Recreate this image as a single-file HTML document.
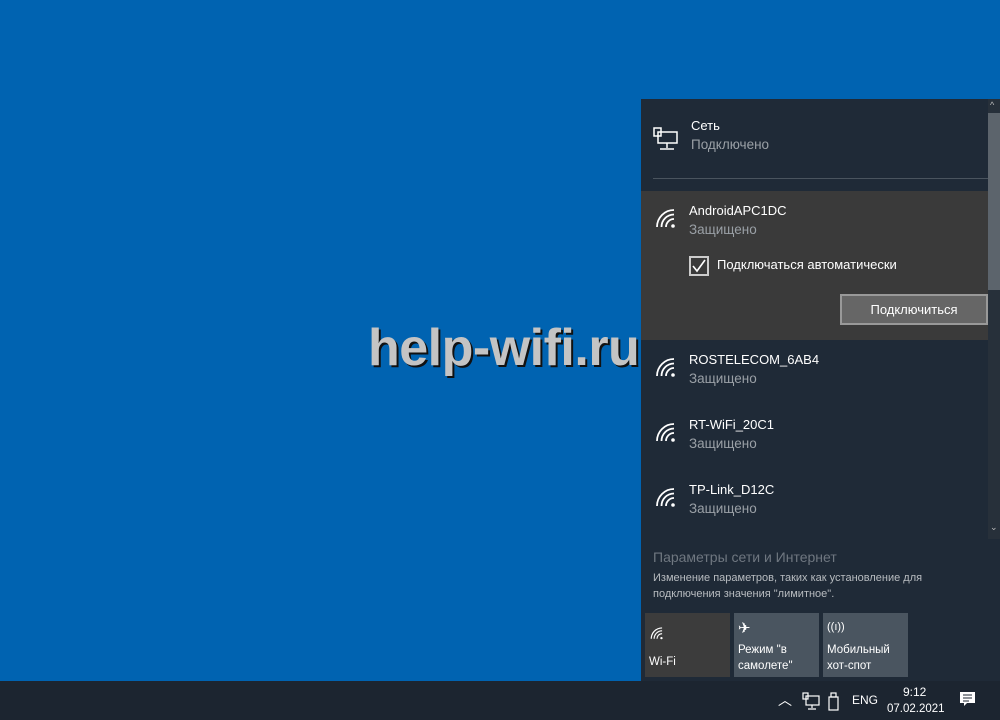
<!DOCTYPE html><html><head><meta charset="utf-8"><style>
*{margin:0;padding:0;box-sizing:border-box}
body{width:1000px;height:720px;overflow:hidden;background:#0063b1;font-family:"Segoe UI","Liberation Sans","DejaVu Sans",sans-serif;position:relative}
.a{position:absolute}
.panel{left:641px;top:99px;width:359px;height:582px;background:#1f2a37}
.t{color:#fff;font-size:13px;white-space:nowrap}
.s{color:#9aa0a6;font-size:13.5px;white-space:nowrap}
.tile{background:#4a5560;top:613px;width:85px;height:64px;color:#fff;font-size:11.5px}
</style></head><body>
<div class="a" style="left:368px;top:318px;font:bold 52px 'Liberation Sans',sans-serif;color:#c4c4c4;text-shadow:2px 2px 0 #111;letter-spacing:-0.5px">help-wifi.ru</div>
<div class="a panel"></div>
<div class="a" style="left:988px;top:99px;width:12px;height:440px;background:#27303a"></div>
<div class="a" style="left:988px;top:113px;width:12px;height:177px;background:#5c646c"></div>
<div class="a" style="left:990px;top:100px;color:#bbb;font-size:9px">^</div>
<div class="a" style="left:990px;top:522px;color:#bbb;font-size:9px">⌄</div>
<svg class="a" style="left:653px;top:127px" width="26" height="24" viewBox="0 0 26 24" fill="none" stroke="#fff" stroke-width="1.5"><rect x="1" y="1" width="7" height="8"/><rect x="5" y="5" width="19" height="11"/><path d="M14 16v5M7 22h14"/></svg>
<div class="a t" style="left:691px;top:118px">Сеть</div>
<div class="a s" style="left:691px;top:137px">Подключено</div>
<div class="a" style="left:653px;top:178px;width:335px;height:1px;background:#4a545e"></div>
<div class="a" style="left:641px;top:191px;width:347px;height:149px;background:#3a3a3a"></div>
<svg width="0" height="0" style="position:absolute"><defs><g id="w" fill="none" stroke="#fff" stroke-width="1.8"><path d="M2 20A17 17 0 0 1 19 3"/><path d="M6.5 20A12.5 12.5 0 0 1 19 7.5"/><path d="M11 20A8 8 0 0 1 19 12"/><circle cx="18" cy="19" r="1.8" fill="#fff" stroke="none"/></g></defs></svg>
<svg class="a" style="left:655px;top:207px" width="22" height="22"><use href="#w"/></svg>
<div class="a t" style="left:689px;top:203px">AndroidAPC1DC</div>
<div class="a s" style="left:689px;top:222px">Защищено</div>
<div class="a" style="left:689px;top:256px;width:20px;height:20px;border:2px solid #ccc"></div>
<svg class="a" style="left:691px;top:258px" width="16" height="16"><path d="M2 8l4 5 8-11" stroke="#fff" stroke-width="1.6" fill="none"/></svg>
<div class="a t" style="left:717px;top:257px">Подключаться автоматически</div>
<div class="a" style="left:840px;top:294px;width:148px;height:31px;background:#666;border:2px solid #999;color:#fff;font-size:13px;text-align:center;line-height:27px">Подключиться</div>
<svg class="a" style="left:655px;top:356px" width="22" height="22"><use href="#w"/></svg>
<div class="a t" style="left:689px;top:352px">ROSTELECOM_6AB4</div>
<div class="a s" style="left:689px;top:371px">Защищено</div>
<svg class="a" style="left:655px;top:421px" width="22" height="22"><use href="#w"/></svg>
<div class="a t" style="left:689px;top:417px">RT-WiFi_20C1</div>
<div class="a s" style="left:689px;top:436px">Защищено</div>
<svg class="a" style="left:655px;top:486px" width="22" height="22"><use href="#w"/></svg>
<div class="a t" style="left:689px;top:482px">TP-Link_D12C</div>
<div class="a s" style="left:689px;top:501px">Защищено</div>
<div class="a" style="left:653px;top:549px;color:#6f7780;font-size:14px">Параметры сети и Интернет</div>
<div class="a" style="left:653px;top:570px;color:#b8bcc0;font-size:11px;line-height:16px;width:330px">Изменение параметров, таких как установление для подключения значения "лимитное".</div>
<div class="a tile" style="left:645px;background:#3c3c3c"><svg class="a" style="left:5px;top:13px" width="14" height="14" viewBox="0 0 22 22"><use href="#w"/></svg><div class="a" style="left:4px;top:43px">Wi-Fi</div></div>
<div class="a tile" style="left:734px"><div class="a" style="left:4px;top:6px;font-size:15px">✈</div><div class="a" style="left:4px;top:29px;line-height:16px">Режим "в<br>самолете"</div></div>
<div class="a tile" style="left:823px"><div class="a" style="left:4px;top:8px;font-size:11px">((ı))</div><div class="a" style="left:4px;top:29px;line-height:16px">Мобильный<br>хот-спот</div></div>
<div class="a" style="left:0;top:681px;width:1000px;height:39px;background:#1c2530"></div>
<div class="a" style="left:778px;top:690px;color:#fff;font-size:14px">︿</div>
<svg class="a" style="left:802px;top:692px" width="18" height="18" fill="none" stroke="#fff" stroke-width="1.2"><rect x="1" y="1" width="5" height="6"/><rect x="4" y="4" width="13" height="9"/><path d="M10 13v3M6 17h8"/></svg>
<svg class="a" style="left:828px;top:692px" width="14" height="20" fill="none" stroke="#fff" stroke-width="1.2"><rect x="3" y="1" width="5" height="4"/><rect x="1" y="5" width="9" height="13"/></svg>
<div class="a" style="left:852px;top:693px;color:#fff;font-size:12px">ENG</div>
<div class="a" style="left:903px;top:685px;color:#fff;font-size:12px">9:12</div>
<div class="a" style="left:887px;top:703px;color:#fff;font-size:11.5px">07.02.2021</div>
<svg class="a" style="left:959px;top:691px" width="18" height="18"><path d="M1 1h15v11H8l-3 3v-3H1z" fill="#fff"/><path d="M4 4h9M4 7h9M4 10h6" stroke="#1c2530"/></svg>
</body></html>
